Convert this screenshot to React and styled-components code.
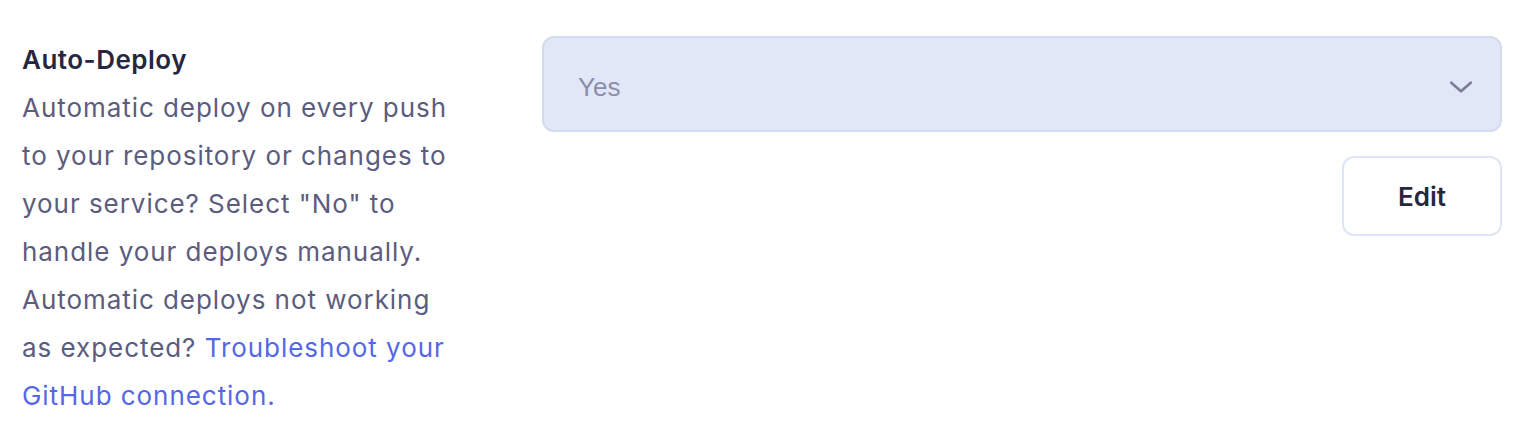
import React from 'react';
import styled, { createGlobalStyle } from 'styled-components';

const GlobalStyle = createGlobalStyle`
  body {
    margin: 0;
    background: #ffffff;
    font-family: Inter, "Noto Sans", sans-serif;
  }
`;

const Section = styled.section`
  display: grid;
  grid-template-columns: 440px 1fr;
  column-gap: 80px;
  padding: 36px 22px 0 22px;
`;

const Info = styled.div`
  display: flex;
  flex-direction: column;
`;

const Title = styled.h3`
  margin: 0;
  font-size: 26px;
  line-height: 48px;
  font-weight: 600;
  letter-spacing: 0.5px;
  color: #26263f;
`;

const Description = styled.p`
  margin: 0;
  font-size: 26px;
  line-height: 48px;
  font-weight: 400;
  letter-spacing: 0.95px;
  color: #5c5c7e;
`;

const Link = styled.a`
  color: #5468e7;
  text-decoration: none;
`;

const Controls = styled.div`
  display: flex;
  flex-direction: column;
  align-items: flex-end;
  gap: 24px;
`;

const SelectBox = styled.div`
  box-sizing: border-box;
  width: 100%;
  height: 96px;
  display: flex;
  align-items: center;
  justify-content: space-between;
  padding: 6px 26px 0 34px;
  background: #e1e7f7;
  border: 2px solid #d2dbf0;
  border-radius: 12px;
`;

const SelectValue = styled.span`
  font-family: "Liberation Sans", Arial, sans-serif;
  font-size: 26px;
  color: #8a8eab;
`;

const Button = styled.button`
  box-sizing: border-box;
  width: 160px;
  height: 80px;
  background: #ffffff;
  border: 2px solid #dfe6f5;
  border-radius: 12px;
  font-family: Inter, "Noto Sans", sans-serif;
  font-size: 26px;
  font-weight: 600;
  color: #27273f;
  cursor: pointer;
`;

const Chevron = () => (
  <svg width="26" height="26" viewBox="0 0 24 24" fill="none" stroke="#7a7d93" strokeWidth="2.4" strokeLinecap="round" strokeLinejoin="round">
    <path d="M3 8l9 8 9-8" />
  </svg>
);

export default function App() {
  return (
    <>
      <GlobalStyle />
      <Section>
        <Info>
          <Title>Auto-Deploy</Title>
          <Description>
            Automatic deploy on every push to your repository or changes to your service? Select "No" to handle your deploys manually. Automatic deploys not working as expected?{' '}
            <Link href="#">Troubleshoot your GitHub connection.</Link>
          </Description>
        </Info>
        <Controls>
          <SelectBox>
            <SelectValue>Yes</SelectValue>
            <Chevron />
          </SelectBox>
          <Button>Edit</Button>
        </Controls>
      </Section>
    </>
  );
}
